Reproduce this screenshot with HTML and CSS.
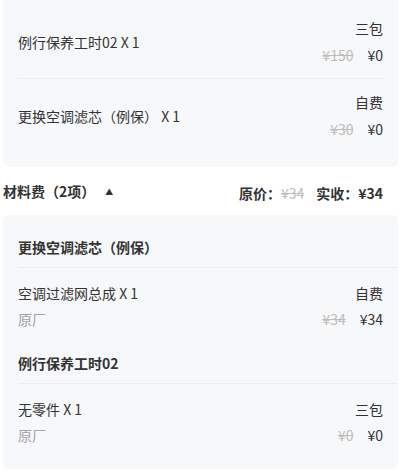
FILE: index.html
```html
<!DOCTYPE html>
<html lang="zh">
<head>
<meta charset="utf-8">
<link rel="stylesheet" href="styles.css">
</head>
<body>
<div class="page">
  <section class="card card-labor">
    <div class="row">
      <div class="row-name">例行保养工时02 X 1</div>
      <div class="row-side">
        <div class="tag">三包</div>
        <div class="prices"><span class="old">¥150</span><span class="now">¥0</span></div>
      </div>
    </div>
    <div class="row">
      <div class="row-name">更换空调滤芯（例保） X 1</div>
      <div class="row-side">
        <div class="tag">自费</div>
        <div class="prices"><span class="old">¥30</span><span class="now">¥0</span></div>
      </div>
    </div>
  </section>

  <div class="section-head">
    <div class="head-title">材料费（2项）<span class="caret">▲</span></div>
    <div class="head-sum">原价：<span class="old">¥34</span><span class="paid">实收：¥34</span></div>
  </div>

  <section class="card card-parts">
    <div class="group">
      <div class="group-title">更换空调滤芯（例保）</div>
      <div class="item">
        <div class="item-line"><span>空调过滤网总成 X 1</span><span>自费</span></div>
        <div class="item-line"><span class="muted">原厂</span><span class="prices"><span class="old">¥34</span><span class="now">¥34</span></span></div>
      </div>
    </div>
    <div class="group">
      <div class="group-title">例行保养工时02</div>
      <div class="item">
        <div class="item-line"><span>无零件 X 1</span><span>三包</span></div>
        <div class="item-line"><span class="muted">原厂</span><span class="prices"><span class="old">¥0</span><span class="now">¥0</span></span></div>
      </div>
    </div>
  </section>
</div>
</body>
</html>
```

FILE: styles.css
```css
* { box-sizing: border-box; }
html, body {
  margin: 0;
  padding: 0;
  background: #ffffff;
}
body {
  font-family: "Noto Sans CJK SC", "Noto Sans", sans-serif;
  font-size: 14px;
  color: #333333;
  overflow: hidden;
}
.page {
  margin-top: -10px;
  padding: 0 7px 0 3px;
}
.card {
  background: #f7f8fa;
  border-radius: 6px;
}
.card-labor {
  padding: 15px 0 15px;
}
.row {
  display: flex;
  align-items: center;
  justify-content: space-between;
  margin: 0 15px;
  padding: 13px 0;
  border-bottom: 1px solid #ebedf0;
}
.row:last-child { border-bottom: none; }
.row-name {
  line-height: 20px;
}
.row-side {
  display: flex;
  flex-direction: column;
  align-items: flex-end;
  gap: 7px;
  line-height: 20px;
}
.prices {
  display: inline-flex;
  align-items: center;
}
.old {
  color: #bdbdbd;
  text-decoration: line-through;
  font-weight: 400;
}
.prices .now {
  margin-left: 14px;
}
.section-head {
  display: flex;
  align-items: center;
  justify-content: space-between;
  height: 48px;
  padding: 3px 15px 0 0;
  font-weight: 600;
  line-height: 20px;
}
.caret {
  font-size: 8px;
  margin-left: 10px;
  position: relative;
  top: -2px;
}
.head-sum .old {
  margin-right: 12px;
}
.card-parts {
  padding: 10px 0 12px;
}
.group {
  margin-left: 15px;
}
.group-title {
  font-weight: 600;
  line-height: 20px;
  padding: 12px 0 10px;
  border-bottom: 1px solid #ebedf0;
}
.item {
  padding: 15px 15px 12px 0;
  display: flex;
  flex-direction: column;
  gap: 6px;
}
.item-line {
  display: flex;
  justify-content: space-between;
  line-height: 20px;
}
.muted {
  color: #a3a3a3;
}
```
